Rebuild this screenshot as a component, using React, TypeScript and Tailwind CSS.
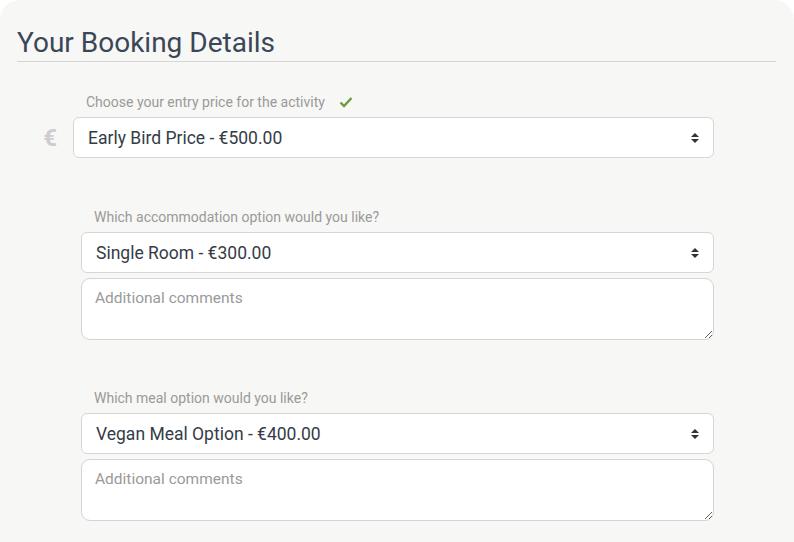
import React from "react";

function Arrows() {
  return (
    <svg width="10" height="12" viewBox="0 0 10 12" className="shrink-0">
      <path d="M5 1 L9 5 H1 Z" fill="#333" />
      <path d="M5 11 L9 7 H1 Z" fill="#333" />
    </svg>
  );
}

function SelectBox({ text }: { text: string }) {
  return (
    <div className="h-[41px] w-full border border-[#d6d6d6] rounded-[6px] bg-white pl-[14px] pr-[13px] flex items-center justify-between text-[17.5px] text-[#343c47]">
      <span className="pt-[2px]">{text}</span>
      <Arrows />
    </div>
  );
}

function Comments() {
  return (
    <textarea
      placeholder="Additional comments"
      className="mt-[5px] block h-[62px] w-full rounded-[9px] border border-[#d3d4d9] bg-white pl-[13px] pt-[8px] text-[15.5px] leading-[22px] text-[#343c47] placeholder:text-[#9a9a9a] outline-none"
    />
  );
}

export default function App() {
  return (
    <div className="w-[794px] h-[542px] bg-white overflow-hidden font-['Roboto',sans-serif]">
      <div className="h-full rounded-t-[20px] bg-[#f7f7f5] pl-[17px] pr-[18px] pt-[26px]">
        <h1 className="text-[28px] leading-[33px] text-[#3b4757] pb-[2px] border-b border-[#d6d6d6]">
          Your Booking Details
        </h1>
        <div className="mt-[30px] w-[697px]">
          <div className="pl-[69px] flex items-center text-[14px] leading-[20px] text-[#9a9a9a]">
            <span>Choose your entry price for the activity</span>
            <svg width="14" height="12" viewBox="0 0 14 12" className="ml-[14px]">
              <path d="M1.5 6.5 L5 10 L12.5 2" fill="none" stroke="#6d9a3c" strokeWidth="2.4" />
            </svg>
          </div>
          <div className="mt-[5px] flex items-center">
            <div className="w-[56px] shrink-0 flex justify-end pr-[16px] text-[24px] font-bold text-[#cdcdcd] leading-none">
              €
            </div>
            <SelectBox text="Early Bird Price - €500.00" />
          </div>
        </div>
        <div className="mt-[49px] w-[697px] pl-[64px]">
          <div className="pl-[13px] text-[14px] leading-[20px] text-[#9a9a9a]">
            Which accommodation option would you like?
          </div>
          <div className="mt-[5px]">
            <SelectBox text="Single Room - €300.00" />
          </div>
          <Comments />
        </div>
        <div className="mt-[48px] w-[697px] pl-[64px]">
          <div className="pl-[13px] text-[14px] leading-[20px] text-[#9a9a9a]">
            Which meal option would you like?
          </div>
          <div className="mt-[5px]">
            <SelectBox text="Vegan Meal Option - €400.00" />
          </div>
          <Comments />
        </div>
      </div>
    </div>
  );
}
